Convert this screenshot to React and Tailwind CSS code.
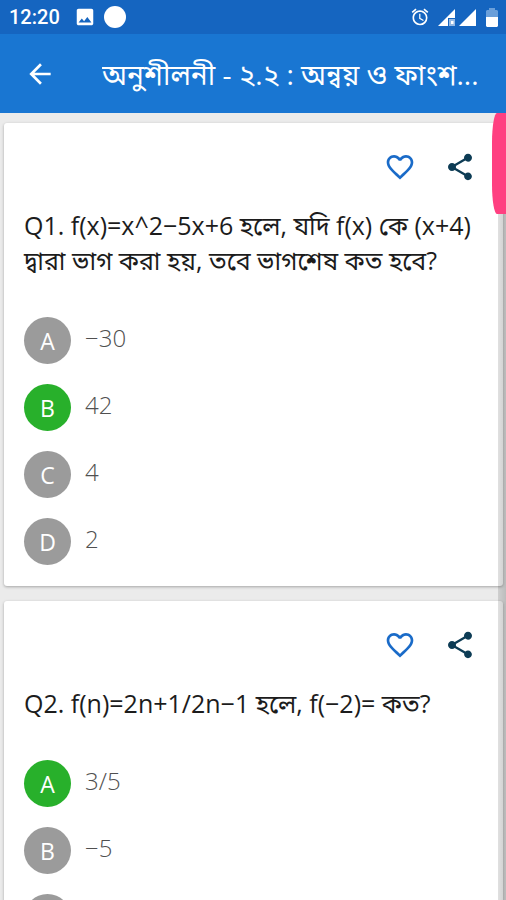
import React from 'react';
import { MdAlarm, MdArrowBack, MdFavoriteBorder, MdImage, MdShare } from 'react-icons/md';

const questions = [
  {
    id: 1,
    text: 'Q1. f(x)=x^2−5x+6 হলে, যদি f(x) কে (x+4) দ্বারা ভাগ করা হয়, তবে ভাগশেষ কত হবে?',
    correct: 'B',
    options: [
      { label: 'A', text: '−30' },
      { label: 'B', text: '42' },
      { label: 'C', text: '4' },
      { label: 'D', text: '2' },
    ],
  },
  {
    id: 2,
    text: 'Q2. f(n)=2n+1/2n−1 হলে, f(−2)= কত?',
    correct: 'A',
    options: [
      { label: 'A', text: '3/5' },
      { label: 'B', text: '−5' },
      { label: 'C', text: '' },
    ],
  },
];

const StatusBar = () => (
  <div className="flex h-[34px] shrink-0 items-center justify-between bg-[#1565c0] pl-[9px] pr-2 text-white">
    <div className="flex items-center">
      <span className="font-['Roboto',sans-serif] text-[20px] font-medium leading-6">12:20</span>
      <MdImage className="ml-[14px] h-[22px] w-[22px]" />
      <span className="ml-2 h-[22px] w-[22px] rounded-full bg-white" />
    </div>
    <div className="flex items-center">
      <MdAlarm className="h-5 w-5" />
      {/* Signal with data marker */}
      <svg className="ml-2 h-[17px] w-[17px]" viewBox="0 0 17 17" fill="currentColor">
        <path d="M17 0v9h-7v8H0z" />
        <path d="M11 10h6v7h-6z" opacity="0.55" />
        <path d="M13 12h2.5v3H13z" />
      </svg>
      <svg className="ml-1 h-[17px] w-[17px]" viewBox="0 0 17 17" fill="currentColor">
        <path d="M17 0v17H0z" />
      </svg>
      <svg className="ml-[10px] h-[19px] w-3" viewBox="0 0 12 19">
        <path d="M3 2V0h6v2h2l1 1v6H0V3l1-1z" fill="#6a9fda" />
        <path d="M0 9h12v9l-1 1H1l-1-1z" fill="#fff" />
      </svg>
    </div>
  </div>
);

const QuestionCard = ({ question }) => (
  <article className="rounded-[3px] bg-white px-5 pb-[21px] pt-7 shadow-[0_1px_3px_rgba(0,0,0,0.3)]">
    {/* Actions */}
    <div className="flex justify-end gap-7 pr-[7px]">
      <button type="button" aria-label="Favourite" className="text-[#1a6bc8]">
        <MdFavoriteBorder className="h-8 w-8" />
      </button>
      <button type="button" aria-label="Share" className="text-[#0d3c55]">
        <MdShare className="h-8 w-8" />
      </button>
    </div>

    <h2 className="mt-[25px] text-[25px] font-normal leading-[35px] text-[#1c1c1c]">{question.text}</h2>

    <ul className="mt-[39px] flex flex-col gap-5">
      {question.options.map((option) => (
        <li key={option.label}>
          <button type="button" className="flex w-full items-start gap-[14px] text-left">
            <span
              className={`flex h-[47px] w-[47px] shrink-0 items-center justify-center rounded-full text-[23px] leading-6 text-white ${
                option.label === question.correct ? 'bg-[#28b02b]' : 'bg-[#9b9b9b]'
              }`}
            >
              {option.label}
            </span>
            {option.text && (
              <span className="pt-[3px] text-[24px] font-light leading-[35px] text-[#505050]">{option.text}</span>
            )}
          </button>
        </li>
      ))}
    </ul>
  </article>
);

const App = () => (
  <div className="flex h-screen flex-col overflow-hidden bg-[#ebebeb] font-['Open_Sans','Noto_Sans_Bengali','Noto_Sans',sans-serif]">
    <StatusBar />

    <header className="flex h-[79px] shrink-0 items-center bg-[#1976d2] pl-6 pr-4 text-white">
      <button type="button" aria-label="Back">
        <MdArrowBack className="h-8 w-8" />
      </button>
      <h1 className="ml-[46px] min-w-0 flex-1 truncate text-[28px] leading-[48px]">
        অনুশীলনী - ২.২ : অন্বয় ও ফাংশ...
      </h1>
    </header>

    <div className="relative min-h-0 flex-1">
      <main className="flex h-full flex-col gap-[15px] overflow-y-auto pb-4 pl-1 pr-[3px] pt-[10px] [scrollbar-width:none] *:shrink-0">
        {questions.map((question) => (
          <QuestionCard key={question.id} question={question} />
        ))}
      </main>

      {/* Fast scroll track and thumb */}
      <div className="absolute inset-y-0 right-0 w-2 bg-gradient-to-r from-black/12 to-black/20" />
      <div className="absolute right-0 top-0 h-[101px] w-[14px] rounded-bl-[5px_30px] rounded-tl-[5px_30px] bg-[#ff4081]" />
    </div>
  </div>
);

export default App;
